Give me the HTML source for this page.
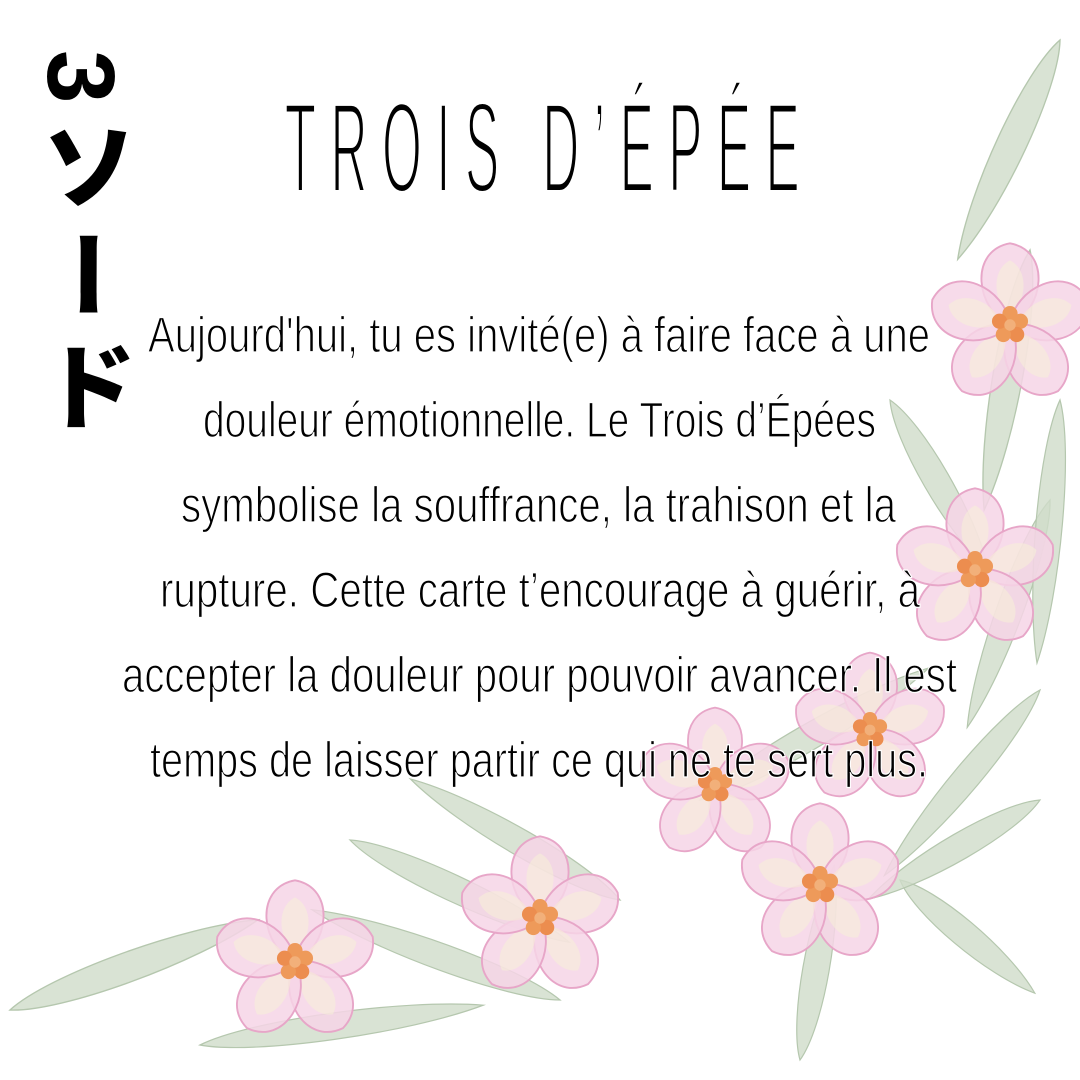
<!DOCTYPE html>
<html><head><meta charset="utf-8"><style>
html,body{margin:0;padding:0;background:#fff;}
body{width:1080px;height:1080px;position:relative;overflow:hidden;}
#jp{position:absolute;left:32px;top:50px;writing-mode:vertical-rl;font-family:"Liberation Sans","Noto Sans CJK JP",sans-serif;font-weight:900;font-size:96px;line-height:1;color:#000;letter-spacing:14px;}
svg{position:absolute;left:0;top:0;}
</style></head><body>
<svg width="1080" height="1080" viewBox="0 0 1080 1080">
<defs>
<g id="petal"><path d="M0,0 C-36,-16 -44,-78 0,-86 C44,-78 36,-16 0,0Z" fill="#f6d5e6" fill-opacity="0.85" stroke="#e7a6c8" stroke-width="2"/><path d="M0,-10 C-18,-25 -20,-58 0,-68 C20,-58 18,-25 0,-10Z" fill="#f6eed8" fill-opacity="0.6"/></g>
<g id="flower">
<use href="#petal" transform="rotate(0)"/><use href="#petal" transform="rotate(72)"/><use href="#petal" transform="rotate(144)"/><use href="#petal" transform="rotate(216)"/><use href="#petal" transform="rotate(288)"/>
<circle cx="0" cy="-12" r="8" fill="#ee9a5a"/><circle cx="11" cy="-4" r="8" fill="#ee9a5a"/><circle cx="7" cy="10" r="8" fill="#ec8d4f"/><circle cx="-7" cy="10" r="8" fill="#ee9a5a"/><circle cx="-11" cy="-4" r="8" fill="#ec8d4f"/><circle cx="0" cy="0" r="6" fill="#f2b07a"/>
</g>
<g id="leaf"><path d="M0,0 C40,-22 160,-22 220,0 C160,22 40,22 0,0Z" fill="#cfdcc9" fill-opacity="0.8" stroke="#b5c7ae" stroke-width="1.5"/></g>
</defs>
<use href="#leaf" transform="translate(1060,40) rotate(115) scale(1.1,0.9)"/>
<use href="#leaf" transform="translate(1030,250) rotate(100) scale(1.2,0.9)"/>
<use href="#leaf" transform="translate(890,400) rotate(60) scale(0.9,0.8)"/>
<use href="#leaf" transform="translate(1050,500) rotate(110) scale(1.1,0.8)"/>
<use href="#leaf" transform="translate(1040,690) rotate(130) scale(1.1,0.8)"/>
<use href="#leaf" transform="translate(900,880) rotate(40) scale(0.8,0.8)"/>
<use href="#leaf" transform="translate(350,840) rotate(25) scale(1.1,0.8)"/>
<use href="#leaf" transform="translate(620,900) rotate(-150) scale(1.1,0.8)"/>
<use href="#leaf" transform="translate(10,1010) rotate(-20) scale(1.2,0.9)"/>
<use href="#leaf" transform="translate(200,1045) rotate(-8) scale(1.3,0.8)"/>
<use href="#leaf" transform="translate(560,1000) rotate(-160) scale(1.2,0.8)"/>
<use href="#leaf" transform="translate(800,1060) rotate(-80) scale(0.9,0.8)"/>
<use href="#leaf" transform="translate(700,800) rotate(-30) scale(1.2,0.8)"/>
<use href="#leaf" transform="translate(1060,400) rotate(95) scale(1.2,0.8)"/>
<use href="#leaf" transform="translate(1040,800) rotate(150) scale(0.9,0.8)"/>
<use href="#flower" transform="translate(1010,325) scale(0.95)"/>
<use href="#flower" transform="translate(975,570) scale(0.95)"/>
<use href="#flower" transform="translate(870,730) scale(0.9)"/>
<use href="#flower" transform="translate(715,785) scale(0.9)"/>
<use href="#flower" transform="translate(820,885) scale(0.95)"/>
<use href="#flower" transform="translate(540,918) scale(0.95)"/>
<use href="#flower" transform="translate(295,962) scale(0.95)"/>
<g transform="scale(0.4,1)">
<text x="712" y="192" textLength="1287" lengthAdjust="spacing" font-family="Liberation Sans Narrow, Liberation Sans, sans-serif" font-size="128" fill="#000" stroke="#fff" stroke-width="4">TROIS D’ÉPÉE</text>
</g>
<g font-family="Liberation Sans Narrow, Liberation Sans, sans-serif" font-size="50" fill="#000" stroke="#fff" stroke-width="1.3">
<text x="148" y="352" textLength="782" lengthAdjust="spacingAndGlyphs">Aujourd'hui, tu es invité(e) à faire face à une</text>
<text x="203" y="437" textLength="673" lengthAdjust="spacingAndGlyphs">douleur émotionnelle. Le Trois d’Épées</text>
<text x="181" y="522" textLength="715" lengthAdjust="spacingAndGlyphs">symbolise la souffrance, la trahison et la</text>
<text x="160" y="607" textLength="760" lengthAdjust="spacingAndGlyphs">rupture. Cette carte t’encourage à guérir, à</text>
<text x="122" y="692" textLength="835" lengthAdjust="spacingAndGlyphs">accepter la douleur pour pouvoir avancer. Il est</text>
<text x="150" y="777" textLength="778" lengthAdjust="spacingAndGlyphs">temps de laisser partir ce qui ne te sert plus.</text>
</g>
</svg>
<div id="jp">3ソード</div>
</body></html>
